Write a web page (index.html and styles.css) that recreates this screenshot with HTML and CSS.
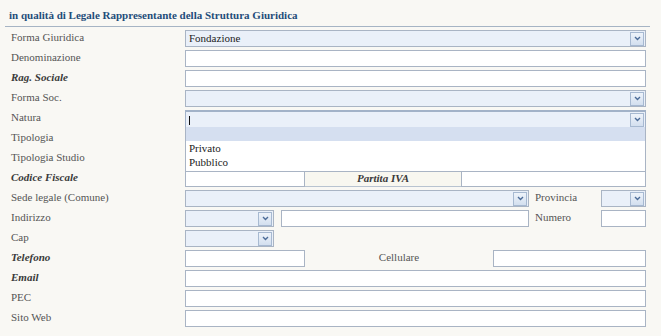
FILE: index.html
```html
<!DOCTYPE html>
<html lang="it">
<head>
    <meta charset="UTF-8">
    <title>Legale Rappresentante</title>
    <link rel="stylesheet" href="styles.css">
</head>
<body>
<div class="panel">
    <div class="title">in qualità di Legale Rappresentante della Struttura Giuridica</div>

    <div class="row">
        <span class="lbl">Forma Giuridica</span>
        <div class="sel grow"><span class="val">Fondazione</span><span class="arr"><svg width="7" height="5" viewBox="0 0 7 5"><path d="M1 1l2.5 2.5L6 1" fill="none" stroke="#4c6c98" stroke-width="1.4"/></svg></span></div>
    </div>
    <div class="row">
        <span class="lbl">Denominazione</span>
        <input class="inp grow" type="text">
    </div>
    <div class="row">
        <span class="lbl req">Rag. Sociale</span>
        <input class="inp grow" type="text">
    </div>
    <div class="row">
        <span class="lbl">Forma Soc.</span>
        <div class="sel grow"><span class="val"></span><span class="arr"><svg width="7" height="5" viewBox="0 0 7 5"><path d="M1 1l2.5 2.5L6 1" fill="none" stroke="#4c6c98" stroke-width="1.4"/></svg></span></div>
    </div>
    <div class="row">
        <span class="lbl">Natura</span>
        <div class="combo grow">
            <div class="sel focus"><span class="val"><span class="caret"></span></span><span class="arr"><svg width="7" height="5" viewBox="0 0 7 5"><path d="M1 1l2.5 2.5L6 1" fill="none" stroke="#4c6c98" stroke-width="1.4"/></svg></span></div>
            <ul class="list">
                <li class="hl"></li>
                <li>Privato</li>
                <li>Pubblico</li>
            </ul>
        </div>
    </div>
    <div class="row">
        <span class="lbl">Tipologia</span>
        <div class="sel grow"></div>
    </div>
    <div class="row">
        <span class="lbl">Tipologia Studio</span>
        <div class="sel grow"></div>
    </div>
    <div class="row">
        <span class="lbl req">Codice Fiscale</span>
        <input class="inp w120" type="text">
        <span class="cell req">Partita IVA</span>
        <input class="inp grow" type="text">
    </div>
    <div class="row">
        <span class="lbl">Sede legale (Comune)</span>
        <div class="sel w343"><span class="val"></span><span class="arr"><svg width="7" height="5" viewBox="0 0 7 5"><path d="M1 1l2.5 2.5L6 1" fill="none" stroke="#4c6c98" stroke-width="1.4"/></svg></span></div>
        <span class="sub">Provincia</span>
        <div class="sel w45"><span class="val"></span><span class="arr"><svg width="7" height="5" viewBox="0 0 7 5"><path d="M1 1l2.5 2.5L6 1" fill="none" stroke="#4c6c98" stroke-width="1.4"/></svg></span></div>
    </div>
    <div class="row">
        <span class="lbl">Indirizzo</span>
        <div class="sel w88"><span class="val"></span><span class="arr"><svg width="7" height="5" viewBox="0 0 7 5"><path d="M1 1l2.5 2.5L6 1" fill="none" stroke="#4c6c98" stroke-width="1.4"/></svg></span></div>
        <input class="inp w248" type="text">
        <span class="sub">Numero</span>
        <input class="inp w45" type="text">
    </div>
    <div class="row">
        <span class="lbl">Cap</span>
        <div class="sel w88"><span class="val"></span><span class="arr"><svg width="7" height="5" viewBox="0 0 7 5"><path d="M1 1l2.5 2.5L6 1" fill="none" stroke="#4c6c98" stroke-width="1.4"/></svg></span></div>
    </div>
    <div class="row">
        <span class="lbl req">Telefono</span>
        <input class="inp w120" type="text">
        <span class="mid">Cellulare</span>
        <input class="inp grow" type="text">
    </div>
    <div class="row">
        <span class="lbl req">Email</span>
        <input class="inp grow" type="text">
    </div>
    <div class="row">
        <span class="lbl">PEC</span>
        <input class="inp grow" type="text">
    </div>
    <div class="row">
        <span class="lbl">Sito Web</span>
        <input class="inp grow" type="text">
    </div>
</div>
</body>
</html>
```

FILE: styles.css
```css
body{
    margin: 0;
    background-color: #f9f8f4;
    font-family: "Liberation Serif", "Times New Roman", serif;
    font-size: 11px;
    color: #555555;
}
.panel{
    width: 645px;
    padding-left: 5px;
}
.title{
    height: 26px;
    line-height: 30px;
    padding-left: 4px;
    font-weight: bold;
    color: #1f4d7a;
    border-bottom: 1px solid #a6b4c4;
    margin-bottom: 1px;
}
.row{
    display: flex;
    align-items: flex-start;
    height: 20px;
    padding-top: 2px;
    padding-right: 4px;
    box-sizing: border-box;
}
.lbl{
    width: 174px;
    padding-left: 6px;
    line-height: 15px;
    flex: none;
}
.req{
    font-weight: bold;
    font-style: italic;
    color: #3a3a3a;
}
.grow{
    flex: 1;
    min-width: 0;
}
.inp{
    height: 17px;
    box-sizing: border-box;
    border: 1px solid #a9b4c4;
    background-color: #ffffff;
    margin: 0;
    padding: 0 3px;
    font: inherit;
}
.sel{
    height: 17px;
    box-sizing: border-box;
    border: 1px solid #a9b4c4;
    background-color: #eaf0f9;
    display: flex;
    align-items: center;
    color: #222222;
}
.sel .val{
    flex: 1;
    padding-left: 3px;
    line-height: 15px;
}
.arr{
    width: 14px;
    height: 14px;
    margin-right: 1px;
    border: 1px solid #a7b9d1;
    background: linear-gradient(#eef3fa, #d3dfef);
    display: flex;
    align-items: center;
    justify-content: center;
    box-sizing: border-box;
}
.w120{ width: 120px; flex: none; }
.w343{ width: 344px; flex: none; }
.w45{ width: 45px; flex: none; }
.w88{ width: 89px; flex: none; }
.w248{ width: 248px; flex: none; margin-left: 7px; }
.cell{
    width: 156px;
    flex: none;
    height: 17px;
    line-height: 15px;
    text-align: center;
    background-color: #f8f7f0;
    border-top: 1px solid #c4ccd6;
    border-bottom: 1px solid #b8c3d0;
    box-sizing: border-box;
}
.sub{
    width: 72px;
    flex: none;
    padding-left: 6px;
    line-height: 15px;
    box-sizing: border-box;
}
.mid{
    width: 188px;
    flex: none;
    text-align: center;
    line-height: 15px;
}
.combo{
    position: relative;
    height: 17px;
}
.sel.focus{
    border-color: #a2b2c8;
    border-top: 2px solid #a2b2c8;
    border-bottom: none;
}
.caret{
    display: inline-block;
    width: 1px;
    height: 9px;
    background-color: #111111;
    vertical-align: middle;
}
.list{
    position: absolute;
    left: 0;
    right: 0;
    top: 17px;
    margin: 0;
    padding: 0 0 2px;
    list-style: none;
    background-color: #ffffff;
    border: 1px solid #a9b4c4;
    border-top: none;
    z-index: 2;
    color: #222222;
}
.list li{
    height: 14px;
    line-height: 14px;
    padding-left: 3px;
}
.list li.hl{
    background-color: #d5dff0;
}
```
